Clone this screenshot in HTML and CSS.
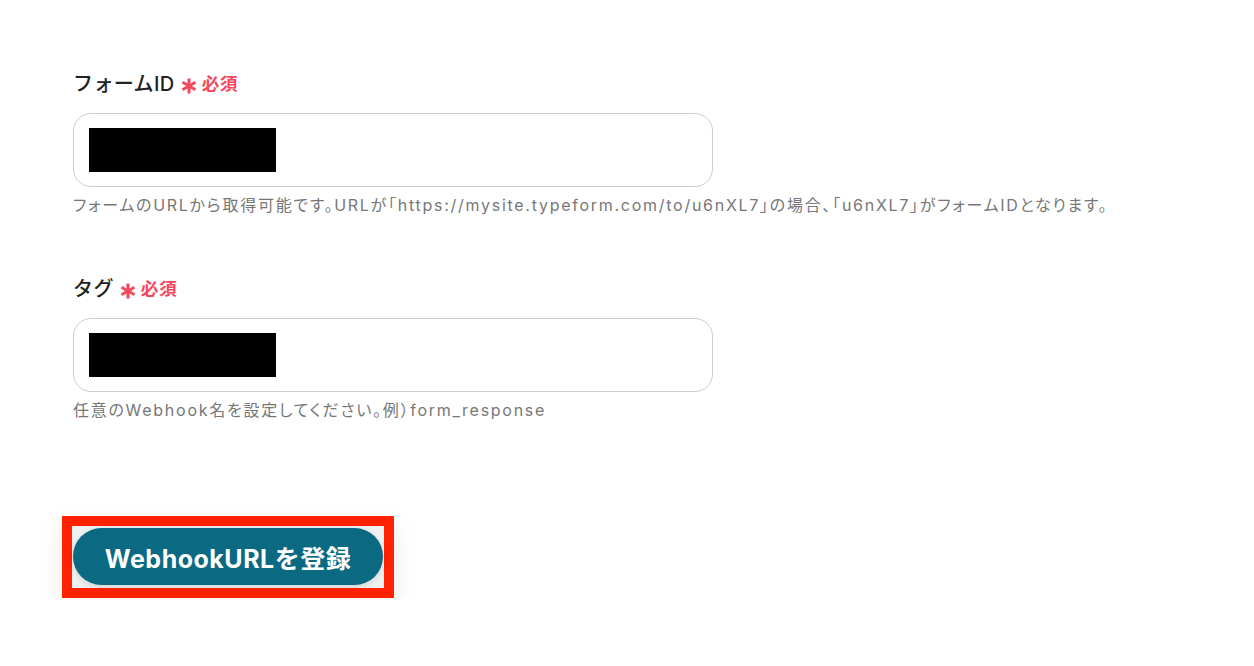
FILE: index.html
```html
<!DOCTYPE html>
<html lang="ja">
<head>
<meta charset="utf-8">
<link rel="stylesheet" href="styles.css">
</head>
<body>
<main class="form">
  <section class="field">
    <div class="label"><span class="label-text">フォームID</span><span class="req"><svg class="ast" viewBox="0 0 16 16" aria-hidden="true"><g stroke="#f5475e" stroke-width="3" stroke-linecap="butt"><line x1="8" y1="0.5" x2="8" y2="15.5"/><line x1="1.5" y1="4.25" x2="14.5" y2="11.75"/><line x1="1.5" y1="11.75" x2="14.5" y2="4.25"/></g></svg>必須</span></div>
    <div class="input"><div class="mask"></div></div>
    <p class="help">フォームのURLから取得可能です。URLが「https://mysite.typeform.com/to/u6nXL7」の場合、「u6nXL7」がフォームIDとなります。</p>
  </section>
  <section class="field field2">
    <div class="label"><span class="label-text">タグ</span><span class="req"><svg class="ast" viewBox="0 0 16 16" aria-hidden="true"><g stroke="#f5475e" stroke-width="3" stroke-linecap="butt"><line x1="8" y1="0.5" x2="8" y2="15.5"/><line x1="1.5" y1="4.25" x2="14.5" y2="11.75"/><line x1="1.5" y1="11.75" x2="14.5" y2="4.25"/></g></svg>必須</span></div>
    <div class="input"><div class="mask"></div></div>
    <p class="help">任意のWebhook名を設定してください。例）form_response</p>
  </section>
  <div class="actions">
    <div class="highlight">
      <button class="btn">WebhookURLを登録</button>
    </div>
  </div>
</main>
</body>
</html>
```
FILE: styles.css
```css
html, body {
  margin: 0;
  padding: 0;
  background: #fff;
}
body {
  font-family: "Inter", "Noto Sans CJK JP", sans-serif;
  color: #222;
}
.form {
  padding: 70px 0 0 73px;
}
.field {
  width: 640px;
}
.field2 {
  margin-top: 59px;
}
.label {
  font-size: 20px;
  font-weight: 500;
  line-height: 28px;
  height: 28px;
  color: #222;
  display: flex;
  align-items: center;
  white-space: nowrap;
}
.label-text {
  letter-spacing: 0.02em;
}
.req {
  color: #f5475e;
  font-size: 17.5px;
  font-weight: 700;
  letter-spacing: 0.05em;
  display: inline-flex;
  align-items: center;
  margin-left: 6px;
}
.ast {
  width: 16px;
  height: 16px;
  margin-right: 5px;
  position: relative;
  top: 2px;
}
.input {
  margin-top: 15px;
  box-sizing: border-box;
  width: 640px;
  height: 74px;
  border: 1px solid #cdcdcd;
  border-radius: 18px;
  padding: 14px 0 0 15px;
}
.mask {
  width: 187px;
  height: 44px;
  background: #000;
}
.help {
  margin: 7px 0 0;
  font-size: 16px;
  line-height: 22px;
  letter-spacing: 0.108em;
  font-feature-settings: "palt";
  color: #777;
  white-space: nowrap;
}
.actions {
  margin-top: 95px;
  margin-left: -11px;
}
.highlight {
  display: inline-block;
  border: 10px solid #ff2200;
  background: #eef0f1;
  box-shadow: 0 10px 28px rgba(0,0,0,0.08);
  line-height: 0;
}
.btn {
  margin: 2px 1px 3px 1px;
  width: 310px;
  height: 57px;
  border: none;
  border-radius: 29px;
  background: #0b6a82;
  color: #fff;
  font-family: "Inter", "Noto Sans CJK JP", sans-serif;
  font-size: 25px;
  font-weight: 700;
  letter-spacing: 0.02em;
  box-shadow: 0 2px 6px rgba(0,0,0,0.12);
  padding: 0;
}
```
